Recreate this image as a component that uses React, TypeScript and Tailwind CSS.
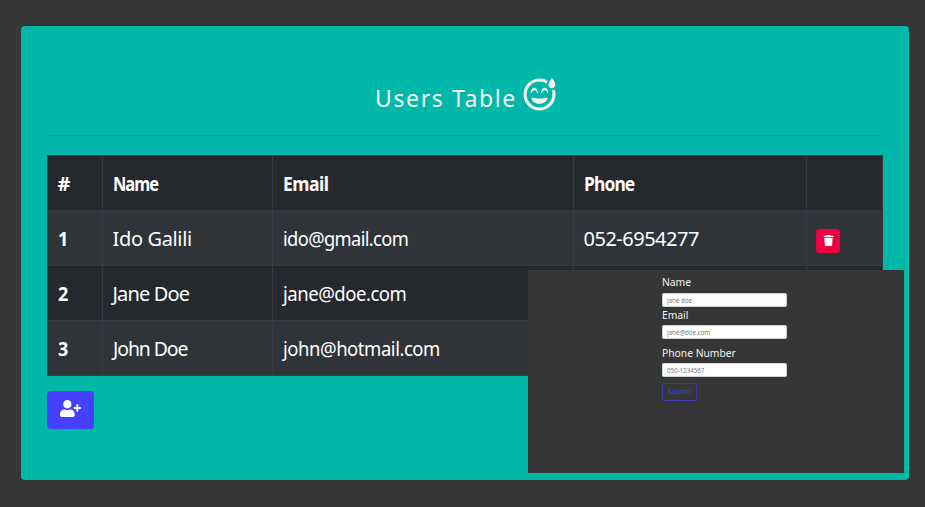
import { FaRegGrinBeamSweat, FaTrash, FaUserPlus } from "react-icons/fa";

const cell = "border border-[#373b41] pr-0 pl-[9.5px] pt-px pb-0 align-middle whitespace-nowrap leading-[53px]";

const users = [
  { id: 1, name: "Ido Galili", nameCls: "tracking-[-0.35px]", email: "ido@gmail.com", emailCls: "scale-x-[0.915] tracking-[-0.7px]", phone: "052-6954277" },
  { id: 2, name: "Jane Doe", nameCls: "tracking-[-0.85px]", email: "jane@doe.com", emailCls: "scale-x-[0.925] tracking-[-0.5px]", phone: "" },
  { id: 3, name: "John Doe", nameCls: "scale-x-[0.97] tracking-[-1.1px]", email: "john@hotmail.com", emailCls: "scale-x-[0.925] tracking-[-0.5px]", phone: "" },
];

function UsersTable() {
  return (
    <table className="w-[836px] table-fixed border-collapse text-left text-[20px] text-white">
      <colgroup>
        <col className="w-[55px]" />
        <col className="w-[170px]" />
        <col className="w-[301px]" />
        <col className="w-[233px]" />
        <col className="w-[76px]" />
      </colgroup>
      <thead>
        <tr className="h-[55px] bg-[#25282c] font-bold">
          <th className={cell}>#</th>
          <th className={cell}><span className="inline-block origin-left scale-x-[0.82] tracking-[-1.2px]">Name</span></th>
          <th className={cell}><span className="inline-block origin-left scale-x-[0.88] tracking-[-0.6px]">Email</span></th>
          <th className={cell}><span className="inline-block origin-left scale-x-[0.87] tracking-[-1px]">Phone</span></th>
          <th className={cell} />
        </tr>
      </thead>
      <tbody>
        {users.map((u) => (
          <tr key={u.id} className="h-[55px] bg-[#25282c] odd:bg-[#303338]">
            <th className={cell}><span className="inline-block origin-left scale-x-90">{u.id}</span></th>
            <td className={cell}><span className={`inline-block origin-left ${u.nameCls}`}>{u.name}</span></td>
            <td className={cell}><span className={`inline-block origin-left ${u.emailCls}`}>{u.email}</span></td>
            <td className={cell}><span className="tracking-[-0.5px]">{u.phone}</span></td>
            <td className={cell}>
              <button className="mt-[5px] -ml-[0.5px] flex h-6 w-6 items-center justify-center rounded-[3px] bg-[#eb0042]">
                <FaTrash className="-mt-[2px] h-[11px] w-[11px]" />
              </button>
            </td>
          </tr>
        ))}
      </tbody>
    </table>
  );
}

function Field({ label, placeholder, className, labelCls }: { label: string; placeholder: string; className: string; labelCls: string }) {
  return (
    <label className={`block ${className}`}>
      <span className={`block whitespace-nowrap text-[10.5px] text-[#f3f3f3] ${labelCls}`}>
        <span className="inline-block origin-left scale-x-[0.98]">{label}</span>
      </span>
      <input
        placeholder={placeholder}
        className="block h-[14px] w-[125px] rounded-[1.5px] border border-[#ced4da] bg-white px-[4px] text-[6.2px] text-[#6c757d] placeholder:text-[#6f7c88] placeholder:opacity-100"
      />
    </label>
  );
}

function UserForm() {
  return (
    <form className="absolute top-[270px] left-[528px] h-[203px] w-[376px] bg-[#363636] pt-[5px] pl-[134px] font-['Noto_Sans',sans-serif]">
      <Field label="Name" placeholder="jane doe" className="h-[32px]" labelCls="mb-[3px] leading-[15px]" />
      <Field label="Email" placeholder="jane@doe.com" className="h-[38px]" labelCls="mb-px leading-[17px]" />
      <Field label="Phone Number" placeholder="050-1234567" className="h-[38px]" labelCls="mb-px leading-[17px]" />
      <button type="button" className="flex h-[18px] w-[35px] items-center justify-center rounded-[2px] border border-[#3e39b4] text-[7px] text-[#443fdc]">
        Submit
      </button>
    </form>
  );
}

export default function App() {
  return (
    <div className="relative h-[507px] w-[925px] overflow-hidden bg-[#363636] pt-[26px] pl-[21px] font-['Noto_Sans',sans-serif]">
      <main className="h-[454px] w-[888px] rounded-[4px] bg-[#00b8a9] px-[26px] pt-[50px]">
        <header className="flex h-[60px] w-[836px] justify-center border-b border-[#05a89b] pl-px">
          <h1 className="mt-[6px] mr-[6px] text-[23px] leading-[32px] font-normal tracking-[1.6px] text-[#f8f3ef]">Users Table</h1>
          <FaRegGrinBeamSweat className="mt-[2px] h-[33px] w-[33px] text-[#f8f3ef]" />
        </header>
        <div className="pt-[19px]">
          <UsersTable />
        </div>
        <button className="mt-[15px] flex h-[38px] w-[47px] items-center justify-center rounded-[4px] bg-[#453fff] text-white">
          <FaUserPlus className="-mt-[4px] -ml-px h-[17px] w-[21px]" />
        </button>
      </main>
      <UserForm />
    </div>
  );
}
